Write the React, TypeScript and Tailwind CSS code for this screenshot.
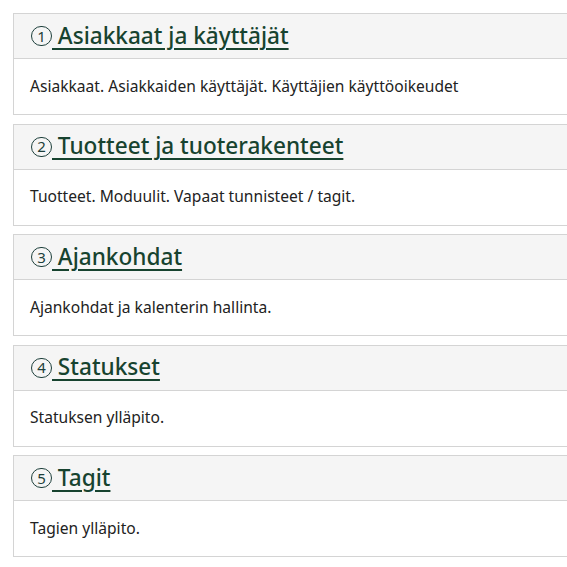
import React from "react";

const items = [
  { n: "1", title: "Asiakkaat ja käyttäjät", desc: "Asiakkaat. Asiakkaiden käyttäjät. Käyttäjien käyttöoikeudet" },
  { n: "2", title: "Tuotteet ja tuoterakenteet", desc: "Tuotteet. Moduulit. Vapaat tunnisteet / tagit." },
  { n: "3", title: "Ajankohdat", desc: "Ajankohdat ja kalenterin hallinta." },
  { n: "4", title: "Statukset", desc: "Statuksen ylläpito." },
  { n: "5", title: "Tagit", desc: "Tagien ylläpito." },
];

export default function App() {
  return (
    <div
      className="w-[567px] h-[567px] overflow-hidden bg-white pl-[13px] pt-[13px]"
      style={{ fontFamily: '"Noto Sans", "Open Sans", sans-serif' }}
    >
      <div className="flex flex-col gap-[8.5px] w-[600px]">
        {items.map((it) => (
          <div key={it.n} className="border border-[#d4d4d4] bg-white">
            <div className="h-[45px] bg-[#f5f5f5] border-b border-[#d4d4d4] pl-[17px] flex items-center">
              <span className="w-[21px] h-[20px] rounded-full border-[1.7px] border-[#1d3f3b] text-[#1d3f3b] flex items-center justify-center text-[15px] leading-none shrink-0">
                {it.n}
              </span>
              <a
                href="#"
                className="text-[22.6px] font-medium text-[#17432f] leading-none whitespace-nowrap underline decoration-2 underline-offset-[4px]"
              >
                {"\u00a0" + it.title}
              </a>
            </div>
            <div className="h-[55px] px-[16px] flex items-center text-[15.6px] text-[#222]">
              {it.desc}
            </div>
          </div>
        ))}
      </div>
    </div>
  );
}
